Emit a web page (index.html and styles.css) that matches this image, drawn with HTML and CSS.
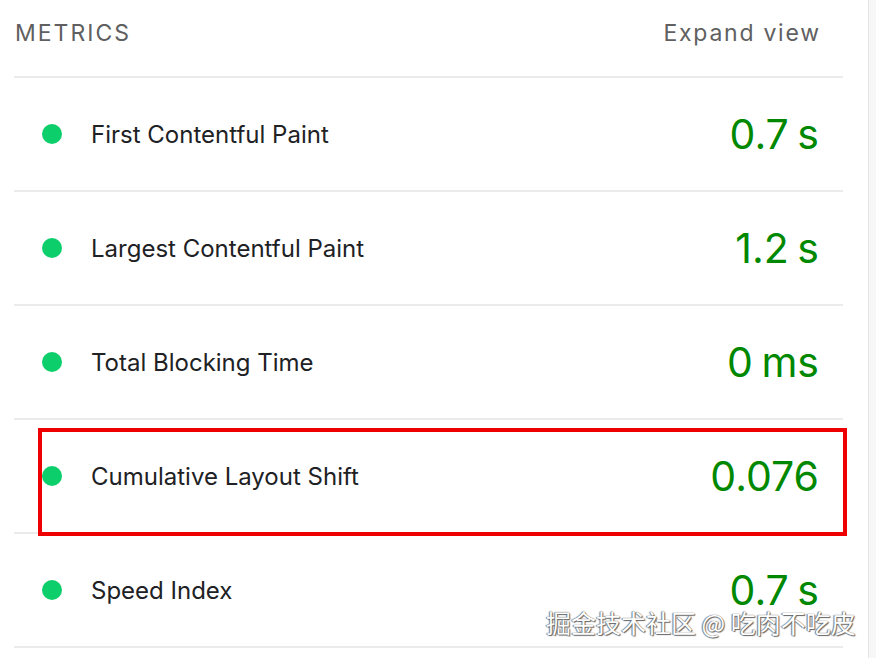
FILE: index.html
```html
<!DOCTYPE html>
<html>
<head>
<meta charset="utf-8">
<link rel="stylesheet" href="styles.css">
</head>
<body>
<div class="panel">
  <div class="header">
    <span class="title">METRICS</span>
    <span class="toggle">Expand view</span>
  </div>
  <div class="row"><span class="dot"></span><span class="label">First Contentful Paint</span><span class="value">0.7 s</span></div>
  <div class="row"><span class="dot"></span><span class="label">Largest Contentful Paint</span><span class="value">1.2 s</span></div>
  <div class="row"><span class="dot"></span><span class="label">Total Blocking Time</span><span class="value">0 ms</span></div>
  <div class="row"><span class="dot"></span><span class="label">Cumulative Layout Shift</span><span class="value">0.076</span></div>
  <div class="row last"><span class="dot"></span><span class="label">Speed Index</span><span class="value">0.7 s</span></div>
  <div class="highlight"></div>
  <div class="watermark">掘金技术社区 @ 吃肉不吃皮</div>
</div>
</body>
</html>
```
FILE: styles.css
```css
html, body {
  margin: 0;
  padding: 0;
}
body {
  background: #f7f7f7;
  font-family: Inter, Roboto, "Noto Sans", sans-serif;
  width: 876px;
  height: 658px;
  overflow: hidden;
}
.panel {
  position: relative;
  box-sizing: border-box;
  width: 869px;
  height: 658px;
  background: #ffffff;
  border-right: 1px solid #e4e4e4;
  padding: 0 25px 0 14px;
}
.header {
  box-sizing: border-box;
  height: 76px;
  display: flex;
  align-items: center;
  justify-content: space-between;
  padding: 0 24px 10px 1px;
  color: #606060;
  font-size: 23px;
}
.title {
  letter-spacing: 2px;
}
.toggle {
  letter-spacing: 1.75px;
  margin-right: -1.75px;
}
.row {
  height: 112px;
  border-top: 2px solid #ebebeb;
  display: flex;
  align-items: center;
  padding: 0 24px 0 28px;
}
.row.last {
  border-bottom: 2px solid #ebebeb;
}
.dot {
  width: 20px;
  height: 20px;
  border-radius: 50%;
  background: #0cce6b;
  flex: none;
}
.label {
  margin-left: 29px;
  font-size: 24px;
  color: #202124;
}
.value {
  margin-left: auto;
  font-size: 41px;
  color: #008800;
  word-spacing: -3px;
}
.highlight {
  position: absolute;
  left: 38px;
  top: 428px;
  width: 809px;
  height: 108px;
  box-sizing: border-box;
  border: 4px solid #ee0000;
}
.watermark {
  position: absolute;
  left: 546px;
  top: 604px;
  font-family: "Noto Sans CJK SC", sans-serif;
  font-size: 25px;
  line-height: 36px;
  color: #ffffff;
  text-shadow: 0 0 1px #555, 1px 1px 1px #666, -1px 0 1px #888;
  white-space: nowrap;
}
```
